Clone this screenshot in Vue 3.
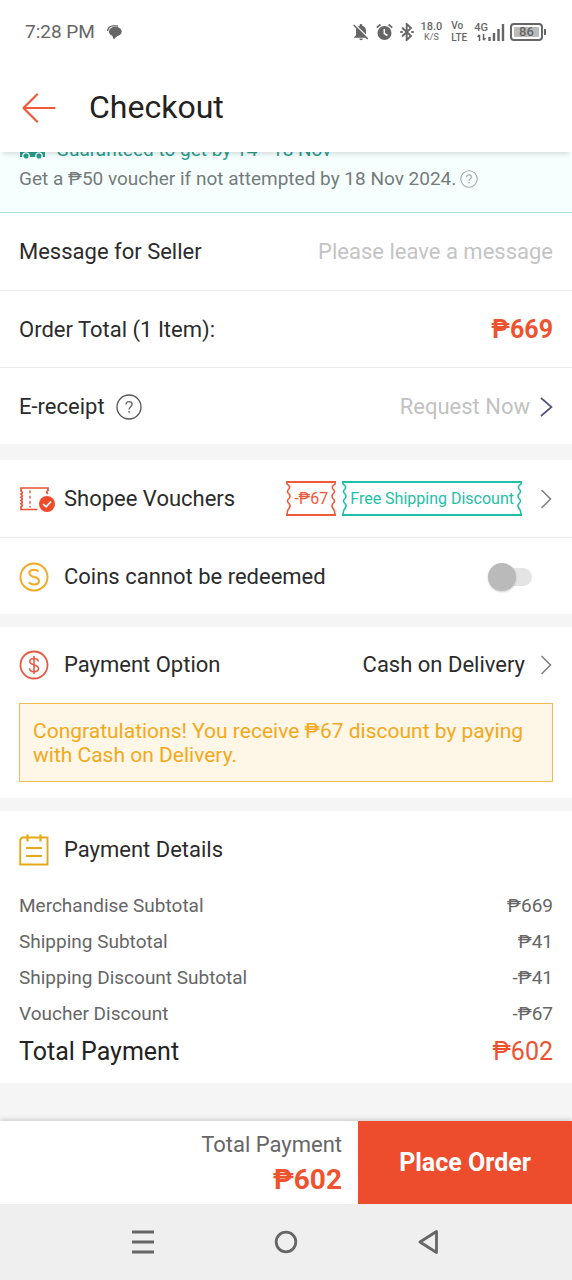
<script setup>
import { ref } from 'vue'

const message = ref('')
const useCoins = ref(false)
const details = [
  { label: 'Merchandise Subtotal', value: '₱669' },
  { label: 'Shipping Subtotal', value: '₱41' },
  { label: 'Shipping Discount Subtotal', value: '-₱41' },
  { label: 'Voucher Discount', value: '-₱67' }
]
const tags = [
  { text: '-₱67', tone: 'red' },
  { text: 'Free Shipping Discount', tone: 'teal' }
]
const edge = 'M1 0 V3 Q5 5.5 3 8 Q0 10.5 3 13 Q5 15 3 17.5 Q0 20 3 22.5 Q5 25 3 27.5 Q1 29 1 35'
</script>

<template>
  <div class="screen">
    <div class="status">
      <span class="time">7:28 PM</span>
      <svg class="chat" width="15" height="15" viewBox="0 0 15 15">
        <path d="M.8 6C.6 3 3 .9 6.500.9h4.500" fill="none" stroke="#666" stroke-width="1.400" />
        <ellipse cx="8.300" cy="6.600" rx="6.400" ry="4.900" fill="#666" />
        <path d="M4.800 9.500L6.800 14.500 10.500 10.500z" fill="#666" />
      </svg>
      <div class="indicators">
        <svg width="16" height="18" viewBox="0 0 16 18">
          <path d="M8 1c.8 0 1.300.5 1.300 1.200v.5C11.800 3.300 13 5.200 13 7.500v4.700l2 2v.6H1v-.6l2-2V7.500c0-2.300 1.200-4.200 3.700-4.800v-.5C6.700 1.500 7.200 1 8 1zM6.300 15.600h3.400c0 1-.7 1.700-1.700 1.700s-1.700-.7-1.700-1.700z" fill="#666" />
          <path d="M2 1.500l14 14" stroke="#fff" stroke-width="1.300" />
          <path d="M.7 2l14 14" stroke="#666" stroke-width="1.500" />
        </svg>
        <svg width="17" height="18" viewBox="0 0 17 18">
          <circle cx="8.500" cy="10" r="7" fill="#666" />
          <path d="M.8 4.600L4.400 1.500M16.200 4.600L12.600 1.500" stroke="#666" stroke-width="1.700" />
          <path d="M8.300 6v4.500l3.200 2" fill="none" stroke="#fff" stroke-width="1.500" />
        </svg>
        <svg width="14" height="18" viewBox="0 0 14 18">
          <path d="M2 4.500l9 8.500-4.300 4V1L11 5 2 13.500" fill="none" stroke="#666" stroke-width="1.900" />
          <path d="M.3 9h2.400M11.300 9h2.400" stroke="#666" stroke-width="2" />
        </svg>
        <span class="stack speed"><b>18.0</b><small>K/S</small></span>
        <span class="stack volte"><b>Vo</b><b>LTE</b></span>
        <span class="stack net">
          <b>4G</b>
          <svg width="9" height="7" viewBox="0 0 9 7"><path d="M2.500 7V1M.5 2.800l2-2M6.500 0v6M8.500 4.200l-2 2" fill="none" stroke="#666" stroke-width="1.500" /></svg>
        </span>
        <svg class="signal" width="17" height="18" viewBox="0 0 17 18">
          <path d="M1.500 14v4M6 10v8M10.500 6v12M15 1v17" stroke="#666" stroke-width="2.400" />
        </svg>
        <span class="battery"><span class="charge">86</span></span>
      </div>
    </div>

    <header class="header">
      <button class="plain" aria-label="Back">
        <svg width="34" height="30" viewBox="0 0 34 30">
          <path d="M32.500 15H1.500M15 1.500L1.500 15 15 28.500" fill="none" stroke="#ee5a3a" stroke-width="2.200" stroke-linecap="round" stroke-linejoin="round" />
        </svg>
      </button>
      <h1>Checkout</h1>
    </header>

    <main class="content">
      <section class="delivery">
        <p class="guarantee">
          <svg width="27" height="20" viewBox="0 0 27 20">
            <path d="M1 1h15v3h5l5 5v8H1z" fill="#2a9d8f" />
            <circle cx="7" cy="16" r="3.200" fill="#2a9d8f" stroke="#f5fffe" stroke-width="1.300" />
            <circle cx="20" cy="16" r="3.200" fill="#2a9d8f" stroke="#f5fffe" stroke-width="1.300" />
          </svg>
          Guaranteed to get by 14 - 18 Nov
        </p>
        <p class="voucher-note">
          Get a ₱50 voucher if not attempted by 18 Nov 2024.
          <svg width="18" height="18" viewBox="0 0 18 18">
            <circle cx="9" cy="9" r="8.200" fill="none" stroke="#a4aaaa" stroke-width="1.100" />
            <path d="M6.600 7.200C6.600 5.600 7.600 4.800 9 4.800s2.400.8 2.400 2.100c0 1.700-2.300 1.900-2.300 3.900M9.100 12v1.400" fill="none" stroke="#a4aaaa" stroke-width="1.200" />
          </svg>
        </p>
      </section>

      <section class="card">
        <div class="row">
          <label for="msg">Message for Seller</label>
          <input id="msg" v-model="message" class="message" type="text" placeholder="Please leave a message" />
        </div>
        <div class="row">
          <span>Order Total (1 Item):</span>
          <strong class="total">₱669</strong>
        </div>
        <div class="row">
          <span>E-receipt</span>
          <button class="plain help" aria-label="About e-receipt">
            <svg width="26" height="26" viewBox="0 0 26 26">
              <circle cx="13" cy="13" r="12" fill="none" stroke="#555" stroke-width="1.300" />
              <path d="M9.900 10.600C9.900 8.700 11.200 7.600 13 7.600s3.100 1 3.100 2.700c0 2.300-3 2.500-3 5.200M13.100 17v1.700" fill="none" stroke="#666" stroke-width="1.400" />
            </svg>
          </button>
          <button class="plain end request">
            Request Now
            <svg class="chev" width="13" height="20" viewBox="0 0 13 20"><path d="M1 1l10.500 9L1 19" fill="none" stroke="#55557a" stroke-width="1.700" /></svg>
          </button>
        </div>
      </section>

      <section class="card vouchers">
        <div class="row">
          <svg class="icon wide" width="36" height="26" viewBox="0 0 36 26">
            <path d="M18.500 23.500H2v-3q2.500-.8 0-2.800 2.500-1 0-3.200 2.500-1 0-3.200 2.500-1 0-3.200 2.500-1 0-3.200V2H29V4.500q-2.600 1.200 0 3.400" fill="none" stroke="#e8503a" stroke-width="1.700" />
            <path d="M11 4.500v17" stroke="#e8503a" stroke-width="1.400" stroke-dasharray="2.800 2.400" />
            <circle cx="28" cy="18" r="8" fill="#ee4d2d" />
            <path d="M24.100 18l3 2.900 4.900-5.400" fill="none" stroke="#fff" stroke-width="1.700" />
          </svg>
          <span>Shopee Vouchers</span>
          <button class="plain end tags">
            <span v-for="t in tags" :key="t.text" class="tag" :class="t.tone">
              <svg width="5" height="35" viewBox="0 0 5 35"><path :d="edge" fill="none" stroke="currentColor" stroke-width="1.600" /></svg>
              <span class="tag-text">{{ t.text }}</span>
              <svg class="flip" width="5" height="35" viewBox="0 0 5 35"><path :d="edge" fill="none" stroke="currentColor" stroke-width="1.600" /></svg>
            </span>
            <svg class="chev" width="13" height="20" viewBox="0 0 13 20"><path d="M1.500 1l9 9-9 9" fill="none" stroke="#808080" stroke-width="1.600" /></svg>
          </button>
        </div>
        <div class="row">
          <svg class="icon" width="30" height="30" viewBox="0 0 30 30">
            <circle cx="15" cy="15" r="13.500" fill="none" stroke="#f6a823" stroke-width="1.900" />
            <path d="M19.600 9.500C18.300 8.300 16.800 7.800 15 7.800c-2.800 0-4.600 1.400-4.600 3.500 0 4.800 9.600 2.600 9.600 7.400 0 2.300-2 3.700-4.800 3.700-2.200 0-4-.8-5.400-2" fill="none" stroke="#f6a823" stroke-width="2" />
          </svg>
          <label for="coins">Coins cannot be redeemed</label>
          <input id="coins" v-model="useCoins" class="switch end" type="checkbox" role="switch" />
        </div>
      </section>

      <section class="card payment">
        <div class="row">
          <svg class="icon" width="30" height="30" viewBox="0 0 30 30">
            <circle cx="15" cy="15" r="13.500" fill="none" stroke="#e65a43" stroke-width="1.800" />
            <path d="M19.300 11.500c-.2-2-1.900-3-4.300-3-2.600 0-4.200 1.200-4.200 3.100 0 4.300 8.700 2.300 8.700 6.800 0 2-1.800 3.300-4.500 3.300-2.600 0-4.300-1.300-4.500-3.500M15 6v18" fill="none" stroke="#e65a43" stroke-width="1.600" />
          </svg>
          <span>Payment Option</span>
          <button class="plain end">
            Cash on Delivery
            <svg class="chev" width="13" height="20" viewBox="0 0 13 20"><path d="M1.500 1l9 9-9 9" fill="none" stroke="#808080" stroke-width="1.600" /></svg>
          </button>
        </div>
        <p class="promo">Congratulations! You receive ₱67 discount by paying with Cash on Delivery.</p>
      </section>

      <section class="card">
        <div class="row">
          <svg class="icon" width="30" height="32" viewBox="0 0 30 32">
            <path d="M6 3.500H3L1.200 5.500V30.500H28.500V3.500H24M11 3.500h8" fill="none" stroke="#e6a817" stroke-width="1.900" />
            <path d="M8.500.5v7M21.500.5v7M6 3.500h5M19 3.500h5" stroke="#e6a817" stroke-width="2.200" />
            <path d="M7 14h16M7 22h16" stroke="#e6a817" stroke-width="2" />
          </svg>
          <h2>Payment Details</h2>
        </div>
        <table class="details">
          <tbody>
            <tr v-for="d in details" :key="d.label">
              <th scope="row">{{ d.label }}</th>
              <td>{{ d.value }}</td>
            </tr>
          </tbody>
          <tfoot>
            <tr>
              <th scope="row">Total Payment</th>
              <td>₱602</td>
            </tr>
          </tfoot>
        </table>
      </section>
    </main>

    <footer class="footer">
      <div class="sum">
        <span>Total Payment</span>
        <strong>₱602</strong>
      </div>
      <button class="order">Place Order</button>
    </footer>

    <nav class="nav" aria-label="System">
      <button class="plain" aria-label="Recent apps">
        <svg width="24" height="24" viewBox="0 0 24 24"><path d="M1 2h22M1 12h22M1 22h22" stroke="#666" stroke-width="2.800" /></svg>
      </button>
      <button class="plain" aria-label="Home">
        <svg width="24" height="24" viewBox="0 0 24 24"><circle cx="12" cy="12" r="9.800" fill="none" stroke="#666" stroke-width="2.800" /></svg>
      </button>
      <button class="plain" aria-label="Back">
        <svg width="24" height="24" viewBox="0 0 24 24"><path d="M19.500 1.500v21L3 12z" fill="none" stroke="#666" stroke-width="2.800" stroke-linejoin="round" /></svg>
      </button>
    </nav>
  </div>
</template>

<style>
body {
  margin: 0;
  background: #f5f5f5;
}
</style>

<style scoped>
* {
  box-sizing: border-box;
}
.screen {
  display: flex;
  flex-direction: column;
  min-height: 100vh;
  font-family: Roboto, "Liberation Sans", sans-serif;
  font-size: 22px;
  line-height: 26px;
  color: #2b2b2b;
  background: #f5f5f5;
}
svg {
  display: block;
  flex: none;
}
h1, h2, p {
  margin: 0;
  font-weight: 400;
}
h2 {
  font-size: 22px;
}
.plain {
  display: flex;
  align-items: center;
  padding: 0;
  border: 0;
  background: none;
  color: inherit;
  font: inherit;
}
.status {
  display: flex;
  align-items: center;
  height: 64px;
  padding: 0 25px;
  background: #fff;
  color: #666;
}
.time {
  font-size: 19px;
}
.chat {
  margin-left: 12px;
}
.indicators {
  display: flex;
  align-items: center;
  gap: 7px;
  margin-left: auto;
}
.stack {
  display: flex;
  flex-direction: column;
  align-items: center;
  font-size: 11px;
  line-height: 10px;
}
.stack b {
  font-weight: 500;
}
.stack small {
  font-size: 9px;
}
.volte {
  margin-left: 2px;
  align-items: flex-start;
  font-size: 10px;
  line-height: 12px;
}
.net {
  gap: 1px;
}
.signal {
  margin-left: -7px;
  margin-right: -2px;
}
.battery {
  position: relative;
  width: 33px;
  height: 18px;
  padding: 2px;
  margin-right: 4px;
  border: 2px solid #666;
  border-radius: 4px;
}
.battery::after {
  content: "";
  position: absolute;
  top: 4px;
  right: -5px;
  width: 2px;
  height: 6px;
  background: #666;
}
.charge {
  display: block;
  background: #bbb;
  border-radius: 1px;
  font-size: 13px;
  line-height: 10px;
  font-weight: 500;
  text-align: center;
}
.header {
  position: relative;
  z-index: 1;
  display: flex;
  align-items: center;
  gap: 33px;
  height: 88px;
  padding: 0 22px;
  background: #fff;
  box-shadow: 0 5px 5px -3px rgba(0, 0, 0, 0.14);
}
h1 {
  font-size: 32px;
  line-height: 38px;
  padding-bottom: 2px;
  color: #222;
}
.content {
  flex: 1;
  display: flex;
  flex-direction: column;
  overflow: hidden;
}
.delivery {
  margin-top: -15px;
  padding: 0 19px 20px;
  background: #f5fffe;
  border-bottom: 1px solid #a9e0d8;
  font-size: 19px;
}
.guarantee {
  display: flex;
  align-items: center;
  gap: 10px;
  color: #2a9d8f;
}
.voucher-note {
  display: flex;
  align-items: center;
  gap: 4px;
  padding-top: 3px;
  color: #757b7b;
}
.card {
  padding: 0 19px;
  background: #fff;
}
.card + .card {
  margin-top: 13px;
}
.card + .vouchers {
  margin-top: 16px;
}
.row {
  position: relative;
  display: flex;
  align-items: center;
  height: 77px;
}
.row + .row {
  padding-top: 2px;
}
.row + .row::before {
  content: "";
  position: absolute;
  top: 0;
  left: -19px;
  right: -19px;
  height: 1px;
  background: #ececec;
}
.message {
  flex: 1;
  min-width: 0;
  padding: 0;
  border: 0;
  outline: 0;
  background: none;
  font: inherit;
  text-align: right;
}
.message::placeholder {
  color: #c4c4c4;
  opacity: 1;
}
.total {
  margin-left: auto;
  font-size: 25px;
  font-weight: 700;
  color: #ee5330;
}
.help {
  margin-left: 11px;
}
.end {
  margin-left: auto;
}
.request {
  color: #c2c2c2;
}
.chev {
  margin-left: 10px;
}
.payment .chev {
  margin-left: 15px;
}
.tags .chev {
  margin-left: 12px;
}
.icon {
  margin-right: 15px;
}
.icon.wide {
  margin-right: 9px;
}
.tags {
  gap: 6px;
  font-size: 16px;
}
.tag {
  display: flex;
  height: 35px;
  border-top: 2px solid;
  border-bottom: 2px solid;
  align-items: center;
}
.tag.red {
  color: #ee5a3a;
}
.tag.teal {
  color: #1fbfa8;
}
.tag-text {
  padding: 0 3px;
}
.flip {
  transform: scaleX(-1);
}
.switch {
  appearance: none;
  position: relative;
  width: 38px;
  height: 18px;
  margin: 0 21px 0 auto;
  border-radius: 9px;
  background: #e4e4e4;
}
.switch::before {
  content: "";
  position: absolute;
  top: -5px;
  left: -6px;
  width: 28px;
  height: 28px;
  border-radius: 50%;
  background: #bababa;
  box-shadow: 0 1px 2px rgba(0, 0, 0, 0.2);
}
.switch:checked::before {
  left: 16px;
}
.payment {
  padding-bottom: 16px;
}
.payment .row {
  height: 76px;
}
.promo {
  padding: 15px 13px 14px;
  border: 1px solid #eebb55;
  background: #fef6e6;
  color: #f2a91c;
  font-size: 21px;
  line-height: 24px;
}
.details {
  width: 100%;
  border-collapse: collapse;
  font-size: 19px;
  color: #666;
}
.details th,
.details td {
  height: 36px;
  padding: 0;
  font-weight: 400;
  text-align: left;
}
.details td {
  text-align: right;
}
.details tfoot th,
.details tfoot td {
  height: 51px;
  padding-bottom: 12px;
  font-size: 25px;
  color: #222;
}
.details tfoot td {
  color: #ee5330;
}
.footer {
  display: flex;
  height: 83px;
  position: relative;
  background: #fff;
  box-shadow: 0 -2px 4px rgba(0, 0, 0, 0.14);
}
.sum {
  flex: 1;
  display: flex;
  flex-direction: column;
  align-items: flex-end;
  justify-content: center;
  padding: 9px 16px 0 0;
  color: #666;
}
.sum strong {
  font-size: 28px;
  line-height: 44px;
  font-weight: 700;
  color: #ee5330;
}
.order {
  width: 214px;
  border: 0;
  background: #ee4d2d;
  color: #fff;
  font: inherit;
  font-size: 25px;
  font-weight: 700;
}
.nav {
  position: relative;
  display: flex;
  justify-content: space-between;
  align-items: center;
  height: 76px;
  padding: 0 131px;
  background: #efefef;
}
</style>
